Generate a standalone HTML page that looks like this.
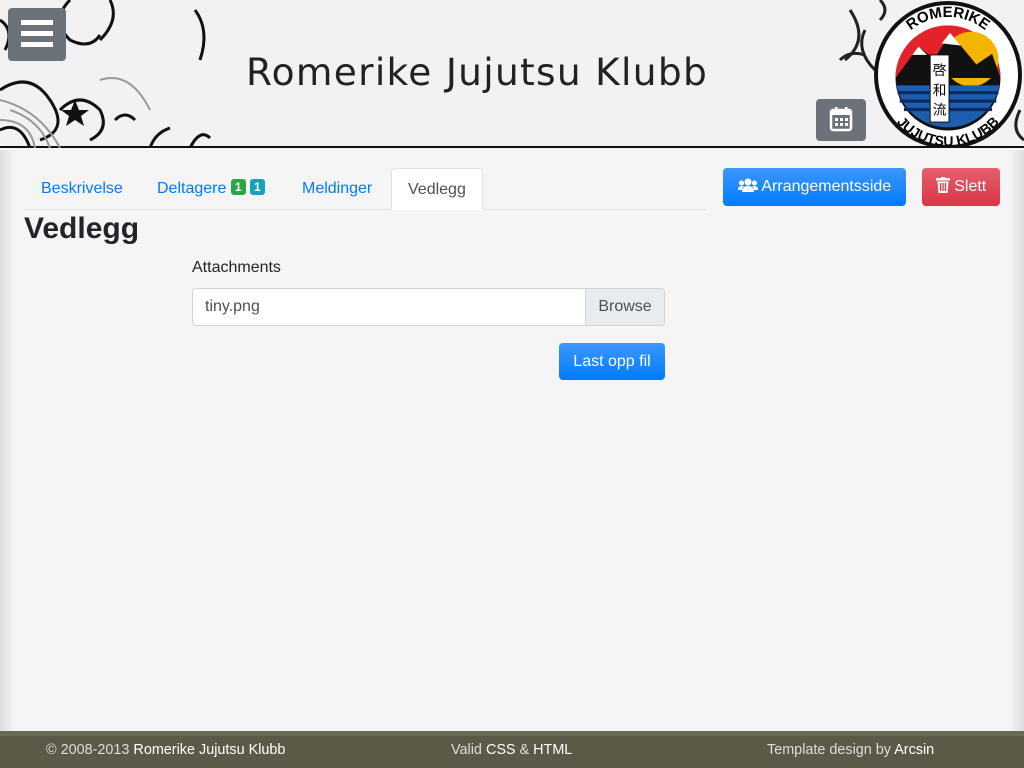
<!DOCTYPE html>
<html><head><meta charset="utf-8"><style>
*{box-sizing:border-box;margin:0;padding:0}
body{width:1024px;height:768px;overflow:hidden;font-family:"Liberation Sans",sans-serif;background:#f5f5f5;position:relative}
.hdr{position:absolute;left:0;top:0;width:1024px;height:148px;background:#f2f2f2;border-bottom:2px solid #111}
.side{position:absolute;top:150px;bottom:37px;width:14px}
.sl{left:0;background:linear-gradient(to right,#dcdcdc,#f5f5f5)}
.sr{right:0;background:linear-gradient(to left,#dcdcdc,#f5f5f5)}
.title{position:absolute;left:246px;top:50px;color:#222;letter-spacing:1.3px;font-family:"DejaVu Sans",sans-serif;font-weight:normal;font-size:37.5px}
.menu{position:absolute;left:8px;top:8px;width:58px;height:53px;background:#6c727a;border-radius:4px}
.menu i{position:absolute;left:13px;width:32px;height:5px;background:#fff}
.cal{position:absolute;left:816px;top:99px;width:50px;height:42px;background:#6c727a;border-radius:4px}
.tabs{position:absolute;left:24px;top:168px;width:683px;height:42px;border-bottom:1px solid #dee2e6}
.tab{position:absolute;top:0;height:42px;line-height:42px;font-size:16px;color:#007bff}
.tab.act{border:1px solid #dee2e6;border-bottom:1px solid #fff;background:#fff;color:#495057;border-radius:4px 4px 0 0;padding:0 16px}
.badge{display:inline-block;font-size:12px;font-weight:bold;color:#fff;border-radius:3px;padding:1px 4px;line-height:14px;vertical-align:2px}
h2{position:absolute;left:24px;top:212px;font-size:30px;font-weight:bold;color:#212529}
.btn{position:absolute;color:#fff;font-size:16px;border-radius:4px;text-align:center}
.foot{position:absolute;left:0;top:731px;width:1024px;height:37px;background:#5b5a47;border-top:5px solid #6b6a55;color:#ddd;font-size:14.4px}
.foot span{position:absolute;top:6px}
.foot b{font-weight:normal;color:#fff}
</style></head><body>
<div class="hdr"></div>
<svg style="position:absolute;left:0;top:0" width="230" height="148"><g fill="none" stroke="#111" stroke-width="3"><path d="M0 90 q30 -20 50 10 q20 30 -10 40"/><path d="M60 110 q20 -20 40 0 q10 20 -10 30"/><path d="M100 40 q20 -20 10 -40"/><path d="M0 130 q20 -10 30 18"/><path d="M115 120 q10 -10 20 0"/><path d="M190 148 q10 -20 20 -10"/><path d="M70 0 q-20 20 0 40 q20 10 30 -5"/><path d="M0 20 q15 10 5 30"/><path d="M150 148 q5 -15 20 -20"/><path d="M200 60 q10 -30 -5 -50"/></g><g fill="none" stroke="#999" stroke-width="2"><path d="M0 100 q40 10 60 48"/><path d="M10 110 q30 10 40 38"/><path d="M0 120 q30 0 35 28"/><path d="M100 80 q30 -10 50 30"/></g><polygon points="75,100 79,110 89,110 81,116 84,126 75,120 66,126 69,116 61,110 71,110" fill="#111"/></svg>
<svg style="position:absolute;top:0;left:820px" width="204" height="148"><g fill="none" stroke="#222" stroke-width="3"><path d="M30 10 q20 30 -5 50"/><path d="M20 60 q10 -10 25 -5"/><path d="M60 0 q10 10 0 20"/><path d="M45 30 q-10 20 10 40"/><path d="M200 110 q-10 20 4 30"/></g><circle cx="128" cy="75" r="72" fill="#fff" stroke="#111" stroke-width="4"/><g transform="translate(128 78) scale(1.05) translate(-128 -78)"><circle cx="128" cy="78" r="50" fill="#111"/><path d="M78 78 a50 50 0 0 1 100 0z" fill="#e5222a"/><circle cx="150" cy="60" r="26" fill="#f5b400"/><path d="M78 78 l22 -30 l15 12 l15 -25 l25 30 l15 -10 l8 23z" fill="#111"/><path d="M100 48 l8 8 l-14 0z M130 35 l10 12 l-18 -2z" fill="#fff"/><path d="M79 85 h98 a50 50 0 0 1 -98 0z" fill="#1b5fae"/><g stroke="#0a2a60" stroke-width="3"><line x1="80" y1="92" x2="176" y2="92"/><line x1="82" y1="100" x2="174" y2="100"/><line x1="86" y1="108" x2="170" y2="108"/></g><rect x="111" y="56" width="18" height="64" fill="#fff" stroke="#111"/><text x="120" y="75" font-size="13" text-anchor="middle" font-family="Noto Sans CJK JP,sans-serif">啓</text><text x="120" y="94" font-size="13" text-anchor="middle" font-family="Noto Sans CJK JP,sans-serif">和</text><text x="120" y="113" font-size="13" text-anchor="middle" font-family="Noto Sans CJK JP,sans-serif">流</text></g><path id="ta" d="M70 75 A58 58 0 0 1 186 75" fill="none"/><path id="tb" d="M60 78 A68 68 0 0 0 196 78" fill="none"/><text font-size="15" font-weight="bold" font-family="Liberation Sans,sans-serif" text-anchor="middle"><textPath href="#ta" startOffset="50%">ROMERIKE</textPath></text><text font-size="14" font-weight="bold" font-family="Liberation Sans,sans-serif" text-anchor="middle"><textPath href="#tb" startOffset="50%">JUJUTSU KLUBB</textPath></text></svg>
<div class="menu"><i style="top:12px"></i><i style="top:23px"></i><i style="top:34px"></i></div>
<div class="cal"><svg width="50" height="42"><rect x="15" y="11" width="20" height="20" rx="2" fill="none" stroke="#fff" stroke-width="2.5"/><rect x="15" y="11" width="20" height="5" fill="#fff"/><rect x="19" y="8" width="2.5" height="5" fill="#fff"/><rect x="29" y="8" width="2.5" height="5" fill="#fff"/><g fill="#fff"><rect x="19" y="19" width="3" height="3"/><rect x="24" y="19" width="3" height="3"/><rect x="29" y="19" width="3" height="3"/><rect x="19" y="24" width="3" height="3"/><rect x="24" y="24" width="3" height="3"/><rect x="29" y="24" width="3" height="3"/></g></svg></div>
<div class="title">Romerike Jujutsu Klubb</div>
<div class="side sl"></div><div class="side sr"></div>
<div class="tabs">
<div class="tab" style="left:17px">Beskrivelse</div>
<div class="tab" style="left:133px">Deltagere <span class="badge" style="background:#28a745">1</span> <span class="badge" style="background:#17a2b8">1</span></div>
<div class="tab" style="left:278px">Meldinger</div>
<div class="tab act" style="left:367px">Vedlegg</div>
</div>
<h2>Vedlegg</h2>
<div class="btn" style="left:723px;top:168px;width:183px;height:38px;line-height:38px;background:linear-gradient(#3d97ff,#007bff)">
<svg width="20" height="14" style="vertical-align:-1px"><g fill="#fff"><circle cx="10" cy="4" r="3.5"/><circle cx="3.5" cy="5" r="2.5"/><circle cx="16.5" cy="5" r="2.5"/><path d="M4 14 q0-6 6-6 q6 0 6 6z"/><path d="M0 12 q0-4 4-4 l2 0 q-2 2 -2 4z M20 12 q0-4 -4-4 l-2 0 q2 2 2 4z"/></g></svg> Arrangementsside</div>
<div class="btn" style="left:922px;top:168px;width:78px;height:38px;line-height:38px;background:linear-gradient(#e4606c,#dc3545)">
<svg width="14" height="16" style="vertical-align:-2px"><g fill="#fff"><rect x="0" y="1" width="14" height="2.5"/><rect x="5" y="0" width="4" height="2"/><path d="M1.5 4.5 h11 l-1 11.5 h-9z"/></g><g fill="#dc3545"><rect x="4" y="6" width="1.3" height="8"/><rect x="6.4" y="6" width="1.3" height="8"/><rect x="8.8" y="6" width="1.3" height="8"/></g></svg> Slett</div>
<div style="position:absolute;left:192px;top:259px;font-size:16px;color:#212529">Attachments</div>
<div style="position:absolute;left:192px;top:288px;width:473px;height:38px;background:#fff;border:1px solid #ced4da;border-radius:4px;font-size:16px;color:#495057;line-height:36px;padding-left:12px">tiny.png
<div style="position:absolute;right:0;top:0;height:36px;width:79px;background:#e9ecef;border-left:1px solid #ced4da;text-align:center;border-radius:0 4px 4px 0">Browse</div></div>
<div class="btn" style="left:559px;top:343px;width:106px;height:37px;line-height:37px;background:linear-gradient(#3d97ff,#007bff)">Last opp fil</div>
<div class="foot"><span style="left:46px">© 2008-2013 <b>Romerike Jujutsu Klubb</b></span><span style="left:451px">Valid <b>CSS</b> &amp; <b>HTML</b></span><span style="left:767px">Template design by <b>Arcsin</b></span></div>
</body></html>
